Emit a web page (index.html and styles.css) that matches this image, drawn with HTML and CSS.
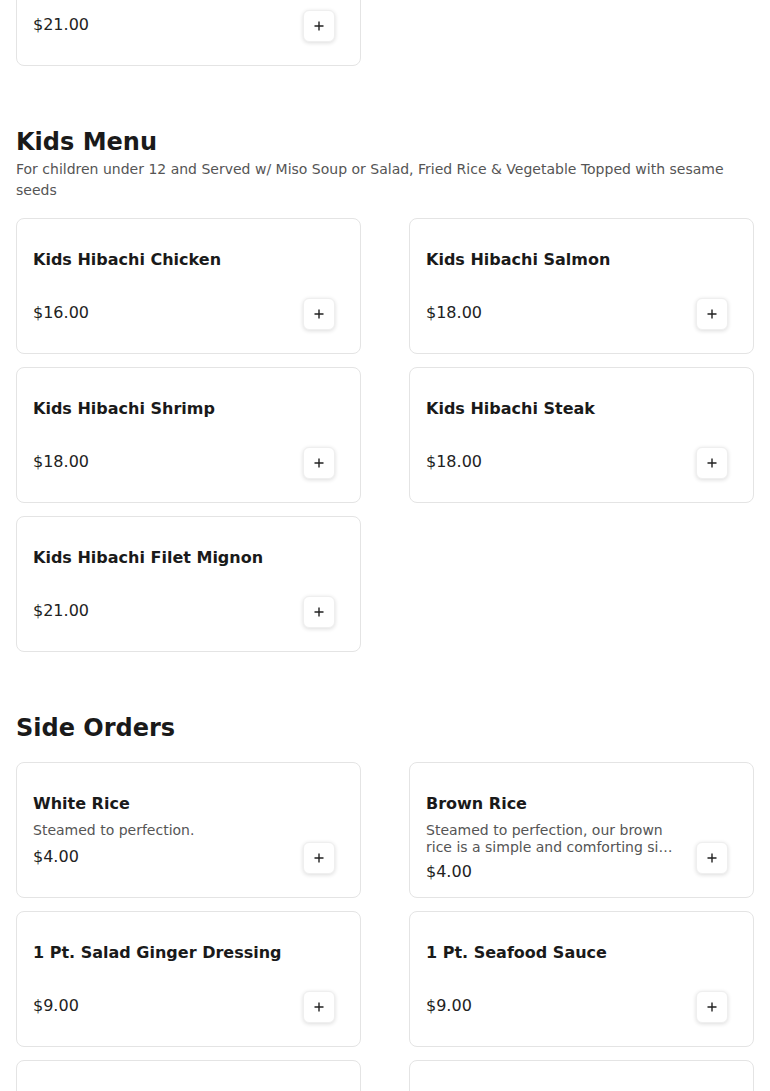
FILE: index.html
```html
<!DOCTYPE html>
<html lang="en">
<head>
<meta charset="utf-8">
<title>Menu</title>
<link rel="stylesheet" href="styles.css">
</head>
<body>
<main class="page">
  <section class="section section-first">
    <div class="grid">
      <div class="card">
        <div class="info">
          <h3 class="title">Hibachi Filet Mignon</h3>
          <p class="desc"></p>
          <div class="price">$21.00</div>
        </div>
        <button class="add" aria-label="Add"><svg viewBox="0 0 12 12" width="12" height="12"><path d="M6 1.5v9M1.5 6h9" stroke="#222" stroke-width="1.4" fill="none"/></svg></button>
      </div>
    </div>
  </section>

  <section class="section">
    <header class="sec-head">
      <h2 class="sec-title">Kids Menu</h2>
      <p class="sec-desc">For children under 12 and Served w/ Miso Soup or Salad, Fried Rice &amp; Vegetable Topped with sesame seeds</p>
    </header>
    <div class="grid">
      <div class="card">
        <div class="info">
          <h3 class="title">Kids Hibachi Chicken</h3>
          <p class="desc"></p>
          <div class="price">$16.00</div>
        </div>
        <button class="add" aria-label="Add"><svg viewBox="0 0 12 12" width="12" height="12"><path d="M6 1.5v9M1.5 6h9" stroke="#222" stroke-width="1.4" fill="none"/></svg></button>
      </div>
      <div class="card">
        <div class="info">
          <h3 class="title">Kids Hibachi Salmon</h3>
          <p class="desc"></p>
          <div class="price">$18.00</div>
        </div>
        <button class="add" aria-label="Add"><svg viewBox="0 0 12 12" width="12" height="12"><path d="M6 1.5v9M1.5 6h9" stroke="#222" stroke-width="1.4" fill="none"/></svg></button>
      </div>
      <div class="card">
        <div class="info">
          <h3 class="title">Kids Hibachi Shrimp</h3>
          <p class="desc"></p>
          <div class="price">$18.00</div>
        </div>
        <button class="add" aria-label="Add"><svg viewBox="0 0 12 12" width="12" height="12"><path d="M6 1.5v9M1.5 6h9" stroke="#222" stroke-width="1.4" fill="none"/></svg></button>
      </div>
      <div class="card">
        <div class="info">
          <h3 class="title">Kids Hibachi Steak</h3>
          <p class="desc"></p>
          <div class="price">$18.00</div>
        </div>
        <button class="add" aria-label="Add"><svg viewBox="0 0 12 12" width="12" height="12"><path d="M6 1.5v9M1.5 6h9" stroke="#222" stroke-width="1.4" fill="none"/></svg></button>
      </div>
      <div class="card">
        <div class="info">
          <h3 class="title">Kids Hibachi Filet Mignon</h3>
          <p class="desc"></p>
          <div class="price">$21.00</div>
        </div>
        <button class="add" aria-label="Add"><svg viewBox="0 0 12 12" width="12" height="12"><path d="M6 1.5v9M1.5 6h9" stroke="#222" stroke-width="1.4" fill="none"/></svg></button>
      </div>
    </div>
  </section>

  <section class="section">
    <header class="sec-head">
      <h2 class="sec-title">Side Orders</h2>
    </header>
    <div class="grid">
      <div class="card">
        <div class="info">
          <h3 class="title">White Rice</h3>
          <p class="desc">Steamed to perfection.</p>
          <div class="price">$4.00</div>
        </div>
        <button class="add" aria-label="Add"><svg viewBox="0 0 12 12" width="12" height="12"><path d="M6 1.5v9M1.5 6h9" stroke="#222" stroke-width="1.4" fill="none"/></svg></button>
      </div>
      <div class="card">
        <div class="info">
          <h3 class="title">Brown Rice</h3>
          <p class="desc">Steamed to perfection, our brown rice is a simple and comforting side dish, full of wholesome, nutty flavor.</p>
          <div class="price">$4.00</div>
        </div>
        <button class="add" aria-label="Add"><svg viewBox="0 0 12 12" width="12" height="12"><path d="M6 1.5v9M1.5 6h9" stroke="#222" stroke-width="1.4" fill="none"/></svg></button>
      </div>
      <div class="card">
        <div class="info">
          <h3 class="title">1 Pt. Salad Ginger Dressing</h3>
          <p class="desc"></p>
          <div class="price">$9.00</div>
        </div>
        <button class="add" aria-label="Add"><svg viewBox="0 0 12 12" width="12" height="12"><path d="M6 1.5v9M1.5 6h9" stroke="#222" stroke-width="1.4" fill="none"/></svg></button>
      </div>
      <div class="card">
        <div class="info">
          <h3 class="title">1 Pt. Seafood Sauce</h3>
          <p class="desc"></p>
          <div class="price">$9.00</div>
        </div>
        <button class="add" aria-label="Add"><svg viewBox="0 0 12 12" width="12" height="12"><path d="M6 1.5v9M1.5 6h9" stroke="#222" stroke-width="1.4" fill="none"/></svg></button>
      </div>
      <div class="card">
        <div class="info">
          <h3 class="title">1 Pt. Yum Yum Sauce</h3>
          <p class="desc"></p>
          <div class="price">$9.00</div>
        </div>
        <button class="add" aria-label="Add"><svg viewBox="0 0 12 12" width="12" height="12"><path d="M6 1.5v9M1.5 6h9" stroke="#222" stroke-width="1.4" fill="none"/></svg></button>
      </div>
      <div class="card">
        <div class="info">
          <h3 class="title">1 Pt. Spicy Mayo Sauce</h3>
          <p class="desc"></p>
          <div class="price">$9.00</div>
        </div>
        <button class="add" aria-label="Add"><svg viewBox="0 0 12 12" width="12" height="12"><path d="M6 1.5v9M1.5 6h9" stroke="#222" stroke-width="1.4" fill="none"/></svg></button>
      </div>
    </div>
  </section>
</main>
</body>
</html>
```

FILE: styles.css
```css
* { box-sizing: border-box; }
html, body {
  margin: 0;
  padding: 0;
  background: #fff;
}
body {
  font-family: "DejaVu Sans", sans-serif;
  color: #1c1c1c;
  overflow: hidden;
}
.page {
  padding: 0 16px;
  margin-top: -70px;
}
.section {
  margin-bottom: 60px;
}
.sec-head {
  margin-bottom: 18px;
}
.sec-title {
  margin: 0;
  font-size: 24px;
  line-height: 32px;
  font-weight: 700;
  color: #1a1a1a;
}
.sec-desc {
  margin: 1px 0 -1px;
  font-size: 14px;
  line-height: 21px;
  color: #555;
}
.grid {
  display: grid;
  grid-template-columns: 1fr 1fr;
  column-gap: 48px;
  row-gap: 13px;
}
.card {
  height: 136px;
  border: 1px solid #e4e4e4;
  border-radius: 8px;
  background: #fff;
  padding: 29px 25px 23px 16px;
  display: flex;
  align-items: flex-start;
  gap: 20px;
}
.info {
  flex: 1;
  min-width: 0;
}
.title {
  margin: 0;
  font-size: 16px;
  line-height: 24px;
  font-weight: 700;
  color: #1a1a1a;
}
.desc {
  margin: 6px 0 0;
  font-size: 14px;
  line-height: 17px;
  min-height: 19px;
  color: #555;
  display: -webkit-box;
  -webkit-line-clamp: 2;
  -webkit-box-orient: vertical;
  overflow: hidden;
}
.price {
  margin-top: 4px;
  font-size: 16px;
  line-height: 24px;
  color: #222;
}
.add {
  align-self: flex-end;
  flex: none;
  width: 32px;
  height: 32px;
  padding: 0;
  border: 1px solid #efefef;
  border-radius: 6px;
  background: #fff;
  box-shadow: 0 1px 4px rgba(0, 0, 0, 0.14);
  display: flex;
  align-items: center;
  justify-content: center;
  cursor: pointer;
}
.add svg { display: block; }
```
